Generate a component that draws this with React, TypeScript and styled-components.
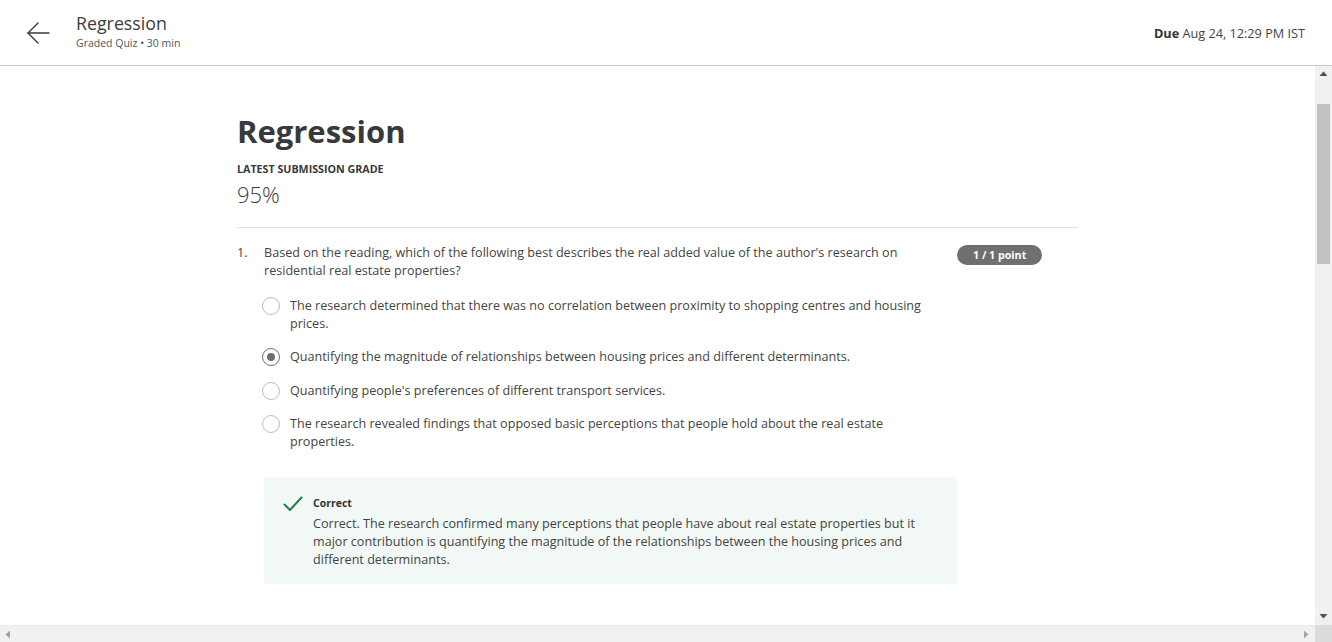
import React from 'react';
import styled, { createGlobalStyle } from 'styled-components';

const GlobalStyle = createGlobalStyle`
  html, body {
    margin: 0;
    padding: 0;
    height: 642px;
    overflow: hidden;
    background: #ffffff;
    font-family: "Open Sans", "Noto Sans", Arial, sans-serif;
    color: #373a3c;
  }
  * { box-sizing: border-box; }
`;

const Frame = styled.div`
  display: grid;
  grid-template-rows: 66px 1fr 17px;
  height: 642px;
  width: 1332px;
`;

const Header = styled.header`
  display: flex;
  align-items: center;
  padding: 0 27px 0 26px;
  border-bottom: 1px solid #c9c9c9;
  background: #fff;
`;

const BackButton = styled.button`
  display: flex;
  align-items: center;
  justify-content: center;
  width: 24px;
  height: 24px;
  padding: 0;
  margin-right: 26px;
  border: none;
  background: transparent;
  cursor: pointer;
`;

const HeaderTitles = styled.div`
  display: flex;
  flex-direction: column;
  margin-top: -4px;
`;

const HeaderTitle = styled.div`
  font-size: 17.8px;
  line-height: 24px;
  color: #3d3d3d;
`;

const HeaderSub = styled.div`
  margin-top: 1px;
  font-size: 10.5px;
  line-height: 14px;
  color: #555;
`;

const DueText = styled.div`
  margin-left: auto;
  font-size: 12.7px;
  color: #444;
  b { font-weight: 700; color: #333; }
`;

const Middle = styled.div`
  display: flex;
  min-height: 0;
`;

const Content = styled.main`
  flex: 1;
  overflow: hidden;
  padding-top: 45px;
`;

const Column = styled.div`
  width: 841px;
  margin: 0 auto;
`;

const PageTitle = styled.h1`
  margin: 0;
  font-size: 31px;
  line-height: 40px;
  font-weight: 700;
  color: #373a3c;
`;

const GradeLabel = styled.div`
  margin-top: 10px;
  font-size: 10.7px;
  line-height: 16px;
  font-weight: 700;
  color: #373a3c;
`;

const GradeValue = styled.div`
  margin-top: 3px;
  font-size: 22px;
  line-height: 28px;
  font-weight: 300;
  color: #3c3c3c;
`;

const Divider = styled.hr`
  margin: 19px 0 0;
  border: none;
  border-top: 1px solid #e1e1e1;
`;

const QuestionRow = styled.section`
  display: flex;
  align-items: flex-start;
  margin-top: 16px;
`;

const QNumber = styled.div`
  width: 27px;
  font-size: 12.6px;
  line-height: 18px;
  color: #444;
`;

const QBody = styled.div`
  width: 693px;
`;

const Prompt = styled.p`
  margin: 0;
  padding-right: 24px;
  font-size: 12.6px;
  line-height: 18px;
  color: #444;
`;

const Options = styled.div`
  display: flex;
  flex-direction: column;
  gap: 15.3px;
  margin-top: 17px;
`;

const Option = styled.label`
  display: flex;
  align-items: flex-start;
  margin-left: -2px;
  padding-right: 20px;
  font-size: 12.6px;
  line-height: 18px;
  color: #444;
`;

const Radio = styled.span<{ $checked?: boolean }>`
  flex: none;
  position: relative;
  width: 18px;
  height: 18px;
  margin-right: 10px;
  border-radius: 50%;
  border: 1.5px solid ${(p) => (p.$checked ? '#6f6f6f' : '#bdbdbd')};
  background: #fff;
  &::after {
    content: '';
    display: ${(p) => (p.$checked ? 'block' : 'none')};
    position: absolute;
    left: 3.5px;
    top: 3.5px;
    width: 8px;
    height: 8px;
    border-radius: 50%;
    background: #6f6f6f;
  }
`;

const Feedback = styled.div`
  display: flex;
  align-items: flex-start;
  margin-top: 26px;
  padding: 18px 30px 15px 19px;
  background: #f2f8f5;
`;

const CheckWrap = styled.div`
  flex: none;
  width: 20px;
  margin-right: 10px;
`;

const FeedbackText = styled.div`
  display: flex;
  flex-direction: column;
`;

const FeedbackTitle = styled.div`
  font-size: 10.5px;
  line-height: 16px;
  font-weight: 700;
  color: #333;
`;

const FeedbackBody = styled.div`
  margin-top: 4px;
  font-size: 12.6px;
  line-height: 18px;
  color: #444;
`;

const PointBadge = styled.div`
  flex: none;
  height: 20px;
  margin-top: 1px;
  padding: 0 16px;
  border-radius: 10px;
  background: #707070;
  color: #fff;
  font-size: 10.7px;
  font-weight: 700;
  line-height: 20px;
  white-space: nowrap;
`;

const VScroll = styled.div`
  display: flex;
  flex-direction: column;
  align-items: center;
  width: 17px;
  background: #f1f1f1;
`;

const ArrowCell = styled.div`
  display: flex;
  align-items: center;
  justify-content: center;
  width: 17px;
  height: 17px;
  flex: none;
`;

const Thumb = styled.div`
  width: 13px;
  height: 160px;
  margin-top: 21px;
  background: #c1c1c1;
`;

const VTrackFill = styled.div`
  flex: 1;
`;

const HScrollRow = styled.div`
  display: flex;
`;

const HTrack = styled.div`
  flex: 1;
  display: flex;
  justify-content: space-between;
  align-items: center;
  background: #f1f1f1;
  border-top: 1px solid #e9e9e9;
`;

const Corner = styled.div`
  width: 17px;
  background: #dcdcdc;
`;

const Tri = ({ dir, color }: { dir: 'up' | 'down' | 'left' | 'right'; color: string }) => {
  const pts = {
    up: '0.5,6 4.5,1.5 8.5,6',
    down: '0.5,2 4.5,6.5 8.5,2',
    left: '6,0.5 1.5,4.5 6,8.5',
    right: '2,0.5 6.5,4.5 2,8.5',
  }[dir];
  return (
    <svg width="9" height="9" viewBox="0 0 9 9">
      <polygon points={pts} fill={color} />
    </svg>
  );
};

const options = [
  {
    text: 'The research determined that there was no correlation between proximity to shopping centres and housing prices.',
    checked: false,
  },
  {
    text: 'Quantifying the magnitude of relationships between housing prices and different determinants.',
    checked: true,
  },
  { text: "Quantifying people's preferences of different transport services.", checked: false },
  {
    text: 'The research revealed findings that opposed basic perceptions that people hold about the real estate properties.',
    checked: false,
  },
];

export default function App() {
  return (
    <>
      <GlobalStyle />
      <Frame>
        <Header>
          <BackButton aria-label="Back">
            <svg width="24" height="24" viewBox="0 0 24 24" fill="none" stroke="#3a3a3a" strokeWidth="1.4" strokeLinecap="round">
              <line x1="2" y1="12" x2="23" y2="12" />
              <polyline points="12,2 2,12 12,22" />
            </svg>
          </BackButton>
          <HeaderTitles>
            <HeaderTitle>Regression</HeaderTitle>
            <HeaderSub>Graded Quiz • 30 min</HeaderSub>
          </HeaderTitles>
          <DueText>
            <b>Due</b> Aug 24, 12:29 PM IST
          </DueText>
        </Header>

        <Middle>
          <Content>
            <Column>
              <PageTitle>Regression</PageTitle>
              <GradeLabel>LATEST SUBMISSION GRADE</GradeLabel>
              <GradeValue>95%</GradeValue>
              <Divider />
              <QuestionRow>
                <QNumber>1.</QNumber>
                <QBody>
                  <Prompt>
                    Based on the reading, which of the following best describes the real added value of the author's
                    research on residential real estate properties?
                  </Prompt>
                  <Options>
                    {options.map((o) => (
                      <Option key={o.text}>
                        <Radio $checked={o.checked} />
                        <span>{o.text}</span>
                      </Option>
                    ))}
                  </Options>
                  <Feedback>
                    <CheckWrap>
                      <svg width="20" height="16" viewBox="0 0 20 16" fill="none" stroke="#1f7f4c" strokeWidth="2" strokeLinecap="round" strokeLinejoin="round">
                        <polyline points="1.5,8.5 7,14 18.5,1.5" />
                      </svg>
                    </CheckWrap>
                    <FeedbackText>
                      <FeedbackTitle>Correct</FeedbackTitle>
                      <FeedbackBody>
                        Correct. The research confirmed many perceptions that people have about real estate properties but it
                        major contribution is quantifying the magnitude of the relationships between the housing prices and
                        different determinants.
                      </FeedbackBody>
                    </FeedbackText>
                  </Feedback>
                </QBody>
                <PointBadge>1 / 1 point</PointBadge>
              </QuestionRow>
            </Column>
          </Content>
          <VScroll>
            <ArrowCell>
              <Tri dir="up" color="#505050" />
            </ArrowCell>
            <Thumb />
            <VTrackFill />
            <ArrowCell>
              <Tri dir="down" color="#505050" />
            </ArrowCell>
          </VScroll>
        </Middle>

        <HScrollRow>
          <HTrack>
            <ArrowCell>
              <Tri dir="left" color="#a3a3a3" />
            </ArrowCell>
            <ArrowCell>
              <Tri dir="right" color="#a3a3a3" />
            </ArrowCell>
          </HTrack>
          <Corner />
        </HScrollRow>
      </Frame>
    </>
  );
}
